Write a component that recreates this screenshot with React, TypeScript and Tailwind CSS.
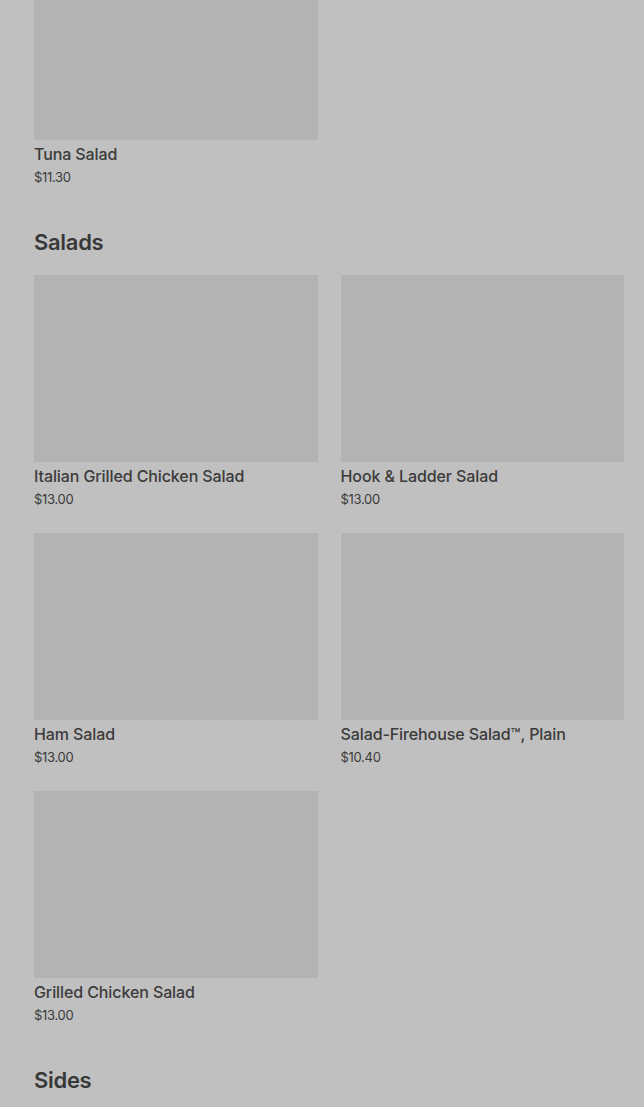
const sections = [
  {
    title: null as string | null,
    items: [{ name: "Tuna Salad", price: "$11.30" }],
  },
  {
    title: "Salads",
    items: [
      { name: "Italian Grilled Chicken Salad", price: "$13.00" },
      { name: "Hook & Ladder Salad", price: "$13.00" },
      { name: "Ham Salad", price: "$13.00" },
      { name: "Salad-Firehouse Salad™, Plain", price: "$10.40" },
      { name: "Grilled Chicken Salad", price: "$13.00" },
    ],
  },
  {
    title: "Sides",
    items: [],
  },
];

function MenuCard({ name, price }: { name: string; price: string }) {
  return (
    <div className="flex flex-col">
      <div className="h-[187px] w-full bg-[#b3b3b3]" />
      <p className="mt-[4px] text-[16px] leading-5 font-medium text-[#3b3b3b] tracking-[-0.1px]">
        {name}
      </p>
      <p className="mt-[4px] text-[13px] leading-[18px] text-[#3b3b3b] tracking-[-0.3px]">
        {price}
      </p>
    </div>
  );
}

export default function App() {
  return (
    <div
      className="h-[1107px] overflow-hidden bg-[#c0c0c0]"
      style={{ fontFamily: "Inter, 'Liberation Sans', sans-serif" }}
    >
      <div className="-mt-[47px] pl-[34px] pr-[20px]">
        {sections.map((section, i) => (
          <section key={i} className={i > 0 ? "mt-[42px]" : ""}>
            {section.title && (
              <h2 className="mb-[19px] text-[22px] leading-7 font-semibold text-[#383838] tracking-[-0.3px]">
                {section.title}
              </h2>
            )}
            <div className="grid grid-cols-2 gap-x-[23px] gap-y-[25px]">
              {section.items.map((item) => (
                <MenuCard key={item.name} name={item.name} price={item.price} />
              ))}
            </div>
          </section>
        ))}
      </div>
    </div>
  );
}
